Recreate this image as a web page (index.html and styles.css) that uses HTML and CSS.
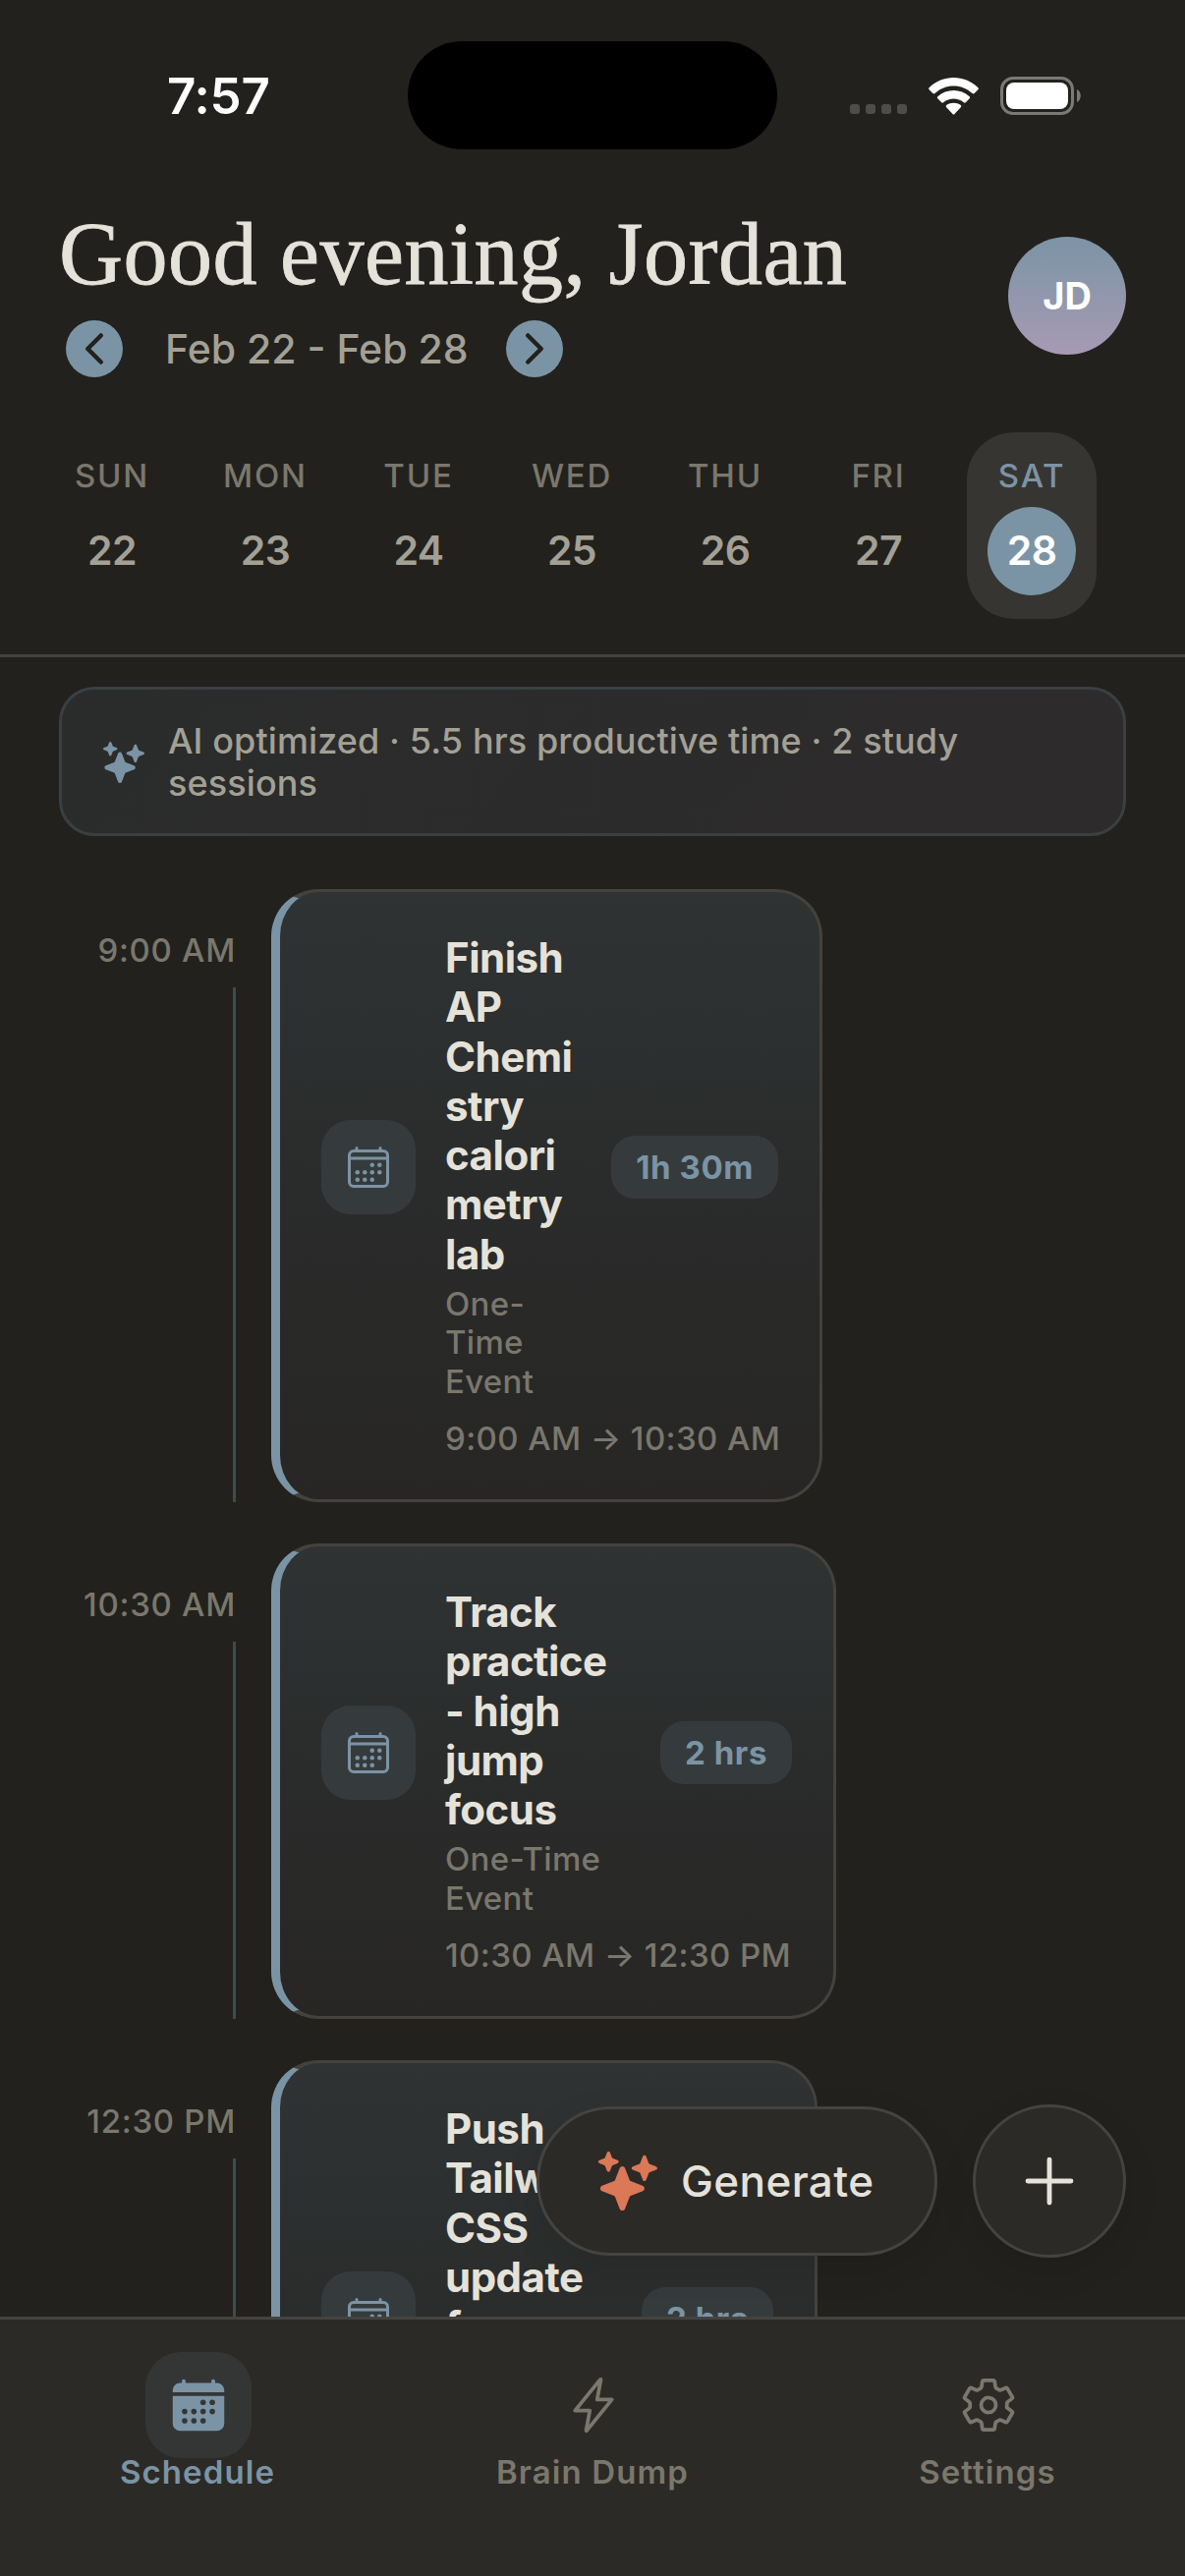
FILE: index.html
```html
<!DOCTYPE html>
<html lang="en">
<head>
	<title>Schedule</title>
	<meta charset="utf-8">
	<meta name="viewport" content="width=device-width, initial-scale=1">
	<link rel="stylesheet" href="styles.css">
</head>
<body>
	<!-- shared icons -->
	<svg class="sprite" width="0" height="0">
		<symbol id="sparkles" viewBox="0 0 512 512">
			<path d="M208 512a24.84 24.84 0 01-23.34-16l-39.84-103.6a16.06 16.06 0 00-9.19-9.19L32 343.34a25 25 0 010-46.68l103.6-39.84a16.06 16.06 0 009.19-9.19L184.66 144a25 25 0 0146.68 0l39.84 103.6a16.06 16.06 0 009.19 9.19l103 39.63A25.49 25.49 0 01400 320.52a24.82 24.82 0 01-16 22.82l-103.6 39.84a16.06 16.06 0 00-9.19 9.19L231.34 496A24.84 24.84 0 01208 512zM88 176a14.67 14.67 0 01-13.69-9.4l-16.86-43.84a7.28 7.28 0 00-4.21-4.21L9.4 101.69a14.67 14.67 0 010-27.38l43.84-16.86a7.31 7.31 0 004.21-4.21L74.16 9.79A15 15 0 0186.23.11a14.67 14.67 0 0115.46 9.29l16.86 43.84a7.31 7.31 0 004.21 4.21l43.84 16.86a14.67 14.67 0 010 27.38l-43.84 16.86a7.28 7.28 0 00-4.21 4.21l-16.86 43.84A14.67 14.67 0 0188 176zM400 256a16 16 0 01-14.93-10.26l-22.84-59.37a8 8 0 00-4.6-4.6l-59.37-22.84a16 16 0 010-29.86l59.37-22.84a8 8 0 004.6-4.6l22.67-58.95a16.45 16.45 0 0113.17-10.57 16 16 0 0116.86 10.15l22.84 59.37a8 8 0 004.6 4.6l59.37 22.84a16 16 0 010 29.86l-59.37 22.84a8 8 0 00-4.6 4.6l-22.84 59.37A16 16 0 01400 256z"/>
		</symbol>
		<symbol id="calendar-dots" viewBox="0 0 512 512">
			<circle cx="296" cy="232" r="24"/><circle cx="376" cy="232" r="24"/>
			<circle cx="136" cy="312" r="24"/><circle cx="216" cy="312" r="24"/><circle cx="296" cy="312" r="24"/><circle cx="376" cy="312" r="24"/>
			<circle cx="136" cy="392" r="24"/><circle cx="216" cy="392" r="24"/><circle cx="296" cy="392" r="24"/>
		</symbol>
		<symbol id="calendar-outline" viewBox="0 0 512 512">
			<rect x="48" y="80" width="416" height="384" rx="48" fill="none" stroke="currentColor" stroke-width="32"/>
			<path d="M128 48v32M384 48v32M464 160H48" fill="none" stroke="currentColor" stroke-width="32" stroke-linecap="round"/>
			<use href="#calendar-dots"/>
		</symbol>
	</svg>

	<div class="status-bar">
		<div class="clock">7:57</div>
		<div class="island"></div>
		<div class="indicators">
			<div class="signal"><i></i><i></i><i></i><i></i></div>
			<svg class="wifi" viewBox="0 0 51 38" fill="#fff">
				<path d="M0.6 12.2a1.5 1.5 0 010-2C14.5-3.3 36.5-3.3 50.4 10.200a1.500 1.500 0 010 2l-3.800 3.900a1.500 1.500 0 01-2 0C34 5.800 17 5.800 6.400 16.100a1.500 1.500 0 01-2 0z"/>
				<path d="M9.300 21.300a1.500 1.500 0 010-2.100c9.200-8.300 23.200-8.300 32.400 0a1.500 1.500 0 010 2.100l-3.900 3.900a1.500 1.500 0 01-2 0c-6-5-14.600-5-20.600 0a1.500 1.500 0 01-2 0z"/>
				<path d="M18.200 30.300a1.500 1.500 0 010-2.200c4.200-3.200 10.400-3.200 14.600 0a1.500 1.500 0 010 2.200l-6.300 6.600a1.400 1.400 0 01-2 0z"/>
			</svg>
			<svg class="battery" viewBox="0 0 82 39">
				<rect x="1.500" y="1.500" width="72" height="36" rx="11.500" fill="none" stroke="#7a7976" stroke-width="3"/>
				<rect x="6" y="6" width="63" height="27" rx="8" fill="#fff"/>
				<path d="M78 13c5 2 5 11 0 13z" fill="#7a7976"/>
			</svg>
		</div>
	</div>

	<header class="header">
		<div class="greeting">
			<h1>Good evening, Jordan</h1>
			<div class="week-nav">
				<button class="round-button" aria-label="Previous week">
					<svg viewBox="0 0 512 512"><path d="M328 112L184 256l144 144"/></svg>
				</button>
				<span class="range">Feb 22 - Feb 28</span>
				<button class="round-button" aria-label="Next week">
					<svg viewBox="0 0 512 512"><path d="M184 112l144 144-144 144"/></svg>
				</button>
			</div>
		</div>
		<div class="avatar">JD</div>
	</header>

	<div class="week">
		<div class="day"><span class="day-name">SUN</span><span class="day-number">22</span></div>
		<div class="day"><span class="day-name">MON</span><span class="day-number">23</span></div>
		<div class="day"><span class="day-name">TUE</span><span class="day-number">24</span></div>
		<div class="day"><span class="day-name">WED</span><span class="day-number">25</span></div>
		<div class="day"><span class="day-name">THU</span><span class="day-number">26</span></div>
		<div class="day"><span class="day-name">FRI</span><span class="day-number">27</span></div>
		<div class="day selected"><span class="day-name">SAT</span><span class="day-number">28</span></div>
	</div>

	<main class="schedule">
		<div class="banner">
			<svg class="banner-icon"><use href="#sparkles"/></svg>
			<p>AI optimized · 5.5 hrs productive time · 2 study<br>sessions</p>
		</div>

		<div class="slot">
			<div class="slot-time">9:00 AM</div>
			<div class="card card-lab">
				<div class="card-row">
					<div class="card-icon"><svg><use href="#calendar-outline"/></svg></div>
					<div class="card-text">
						<h2>Finish<br>AP<br>Chemi<br>stry<br>calori<br>metry<br>lab</h2>
						<p>One-<br>Time<br>Event</p>
					</div>
					<span class="duration">1h 30m</span>
				</div>
				<div class="card-hours">9:00 AM → 10:30 AM</div>
			</div>
		</div>

		<div class="slot">
			<div class="slot-time">10:30 AM</div>
			<div class="card card-track">
				<div class="card-row">
					<div class="card-icon"><svg><use href="#calendar-outline"/></svg></div>
					<div class="card-text">
						<h2>Track<br>practice<br>- high<br>jump<br>focus</h2>
						<p>One-Time<br>Event</p>
					</div>
					<span class="duration">2 hrs</span>
				</div>
				<div class="card-hours">10:30 AM → 12:30 PM</div>
			</div>
		</div>

		<div class="slot">
			<div class="slot-time">12:30 PM</div>
			<div class="card card-push">
				<div class="card-row">
					<div class="card-icon"><svg><use href="#calendar-outline"/></svg></div>
					<div class="card-text">
						<h2>Push<br>Tailwind<br>CSS<br>update<br>for</h2>
					</div>
					<span class="duration">2 hrs</span>
				</div>
			</div>
		</div>
	</main>

	<div class="actions">
		<button class="generate">
			<svg><use href="#sparkles"/></svg>
			<span>Generate</span>
		</button>
		<button class="add" aria-label="Add event">
			<svg viewBox="0 0 512 512"><path d="M256 112v288M400 256H112"/></svg>
		</button>
	</div>

	<nav class="tab-bar">
		<a class="tab active">
			<span class="tab-icon">
				<svg viewBox="0 0 512 512">
					<path fill="currentColor" d="M480 128a64 64 0 00-64-64h-16V48.450c0-8.610-6.620-16-15.230-16.430A16 16 0 00368 48v16H144V48.450c0-8.610-6.620-16-15.230-16.430A16 16 0 00112 48v16H96a64 64 0 00-64 64v12a4 4 0 004 4h440a4 4 0 004-4zM32 416a64 64 0 0064 64h320a64 64 0 0064-64V179a3 3 0 00-3-3H35a3 3 0 00-3 3z"/>
					<use href="#calendar-dots" fill="#343635"/>
				</svg>
			</span>
			<span class="tab-label">Schedule</span>
		</a>
		<a class="tab">
			<span class="tab-icon">
				<svg class="line" viewBox="0 0 512 512"><path d="M315.270 33L96 304h128l-31.510 173.230a2.360 2.360 0 002.330 2.770 2.360 2.360 0 001.890-.950L416 208H288l31.660-173.250a2.450 2.450 0 00-2.440-2.750 2.420 2.420 0 00-1.950 1z"/></svg>
			</span>
			<span class="tab-label">Brain Dump</span>
		</a>
		<a class="tab">
			<span class="tab-icon">
				<svg class="line" viewBox="0 0 512 512"><path d="M262.290 192.310a64 64 0 1057.400 57.400 64.130 64.130 0 00-57.400-57.400zM416.390 256a154.340 154.340 0 01-1.530 20.790l45.210 35.460a10.810 10.810 0 012.450 13.750l-42.770 74a10.810 10.810 0 01-13.140 4.590l-44.900-18.080a16.110 16.110 0 00-15.170 1.750A164.480 164.480 0 01325 400.800a15.940 15.940 0 00-8.820 12.140l-6.730 47.890a11.080 11.080 0 01-10.680 9.170h-85.540a11.110 11.110 0 01-10.690-8.870l-6.720-47.820a16.070 16.070 0 00-9-12.220 155.300 155.300 0 01-21.460-12.570 16 16 0 00-15.110-1.710l-44.890 18.070a10.810 10.810 0 01-13.140-4.580l-42.770-74a10.800 10.800 0 012.450-13.750l38.210-30a16.050 16.050 0 006-14.080c-.360-4.170-.580-8.330-.580-12.500s.210-8.270.580-12.350a16 16 0 00-6.070-13.940l-38.190-30A10.810 10.810 0 0149.480 186l42.770-74a10.810 10.810 0 0113.140-4.590l44.900 18.080a16.110 16.110 0 0015.170-1.750A164.480 164.480 0 01187 111.200a15.940 15.940 0 008.820-12.140l6.730-47.890A11.080 11.080 0 01213.230 42h85.540a11.110 11.110 0 0110.690 8.870l6.720 47.820a16.070 16.070 0 009 12.220 155.300 155.300 0 0121.460 12.570 16 16 0 0015.110 1.710l44.890-18.070a10.810 10.810 0 0113.140 4.580l42.770 74a10.800 10.800 0 01-2.450 13.750l-38.210 30a16.050 16.050 0 00-6.050 14.080c.330 4.140.550 8.300.550 12.470z"/></svg>
			</span>
			<span class="tab-label">Settings</span>
		</a>
	</nav>
</body>
</html>
```
FILE: styles.css
```css
* {
	box-sizing: border-box;
}

body {
	display: flex;
	flex-direction: column;
	position: relative;
	width: 1206px;
	height: 2622px;
	margin: 0;
	overflow: hidden;
	background-color: #22211d;
	color: #e5e2da;
	font-family: Inter, "Liberation Sans", sans-serif;
}

h1, h2, p {
	margin: 0;
}

button {
	border: none;
	padding: 0;
	font-family: inherit;
	color: inherit;
}

.sprite {
	position: absolute;
}

/* status bar */

.status-bar {
	display: grid;
	grid-template-columns: 415px 376px 1fr;
	flex: none;
	height: 208px;
	padding-top: 42px;
}

.clock {
	padding: 25px 0 0 170px;
	font-size: 51px;
	line-height: 62px;
	font-weight: 600;
	letter-spacing: -0.2px;
	color: #ffffff;
}

.island {
	height: 110px;
	border-radius: 55px;
	background-color: #000000;
}

.indicators {
	display: flex;
	align-items: flex-start;
	padding: 36px 0 0 74px;
}

.signal {
	display: flex;
	gap: 6px;
	margin: 28px 22px 0 0;
}

.signal i {
	width: 10px;
	height: 10px;
	border-radius: 3px;
	background-color: #4e4d49;
}

.wifi {
	width: 51px;
	height: 38px;
	margin: 1px 22px 0 0;
}

.battery {
	width: 82px;
	height: 39px;
}

/* header */

.header {
	display: flex;
	justify-content: space-between;
	flex: none;
	height: 232px;
	padding: 0 60px;
}

h1 {
	padding-top: 2px;
	font-family: "Liberation Serif", serif;
	font-size: 90px;
	line-height: 98px;
	font-weight: 400;
	letter-spacing: 0.5px;
	-webkit-text-stroke: 0.8px #e5e2da;
	white-space: nowrap;
}

.week-nav {
	display: flex;
	align-items: center;
	margin: 18px 0 0 7px;
}

.round-button {
	display: flex;
	align-items: center;
	justify-content: center;
	width: 58px;
	height: 58px;
	border-radius: 50%;
	background-color: #7b94a5;
}

.round-button svg {
	width: 48px;
	height: 48px;
	fill: none;
	stroke: #22211d;
	stroke-width: 48;
	stroke-linecap: round;
	stroke-linejoin: round;
}

.range {
	width: 390px;
	padding-left: 43px;
	font-size: 41px;
	line-height: 50px;
	font-weight: 500;
	letter-spacing: 0;
	color: #a3a095;
	white-space: nowrap;
}

.avatar {
	width: 120px;
	height: 120px;
	margin-top: 33px;
	border-radius: 50%;
	background: linear-gradient(#7b94a5, #a79ab4);
	font-size: 38px;
	line-height: 120px;
	font-weight: 700;
	text-align: center;
	color: #ffffff;
}

/* week strip */

.week {
	display: flex;
	gap: 24px;
	flex: none;
	height: 229px;
	padding-left: 48px;
	border-bottom: 3px solid #45433f;
}

.day {
	display: flex;
	flex-direction: column;
	align-items: center;
	width: 132px;
	height: 190px;
	padding-top: 24px;
	border-radius: 48px;
}

.day-name {
	font-size: 33px;
	line-height: 40px;
	font-weight: 500;
	letter-spacing: 1.8px;
	color: #7a776c;
}

.day-number {
	width: 90px;
	height: 90px;
	margin-top: 12px;
	border-radius: 50%;
	font-size: 41px;
	line-height: 89px;
	font-weight: 600;
	letter-spacing: -0.6px;
	text-align: center;
	color: #a3a095;
}

.day.selected {
	background-color: #363531;
}

.selected .day-name {
	color: #7b94a5;
}

.selected .day-number {
	background-color: #7b94a5;
	color: #ffffff;
}

/* schedule */

.schedule {
	flex: 1;
	min-height: 0;
	overflow: hidden;
	padding: 30px 60px 0;
}

.banner {
	display: flex;
	align-items: center;
	gap: 24px;
	height: 152px;
	margin-bottom: 54px;
	padding: 2px 42px 0;
	border: 3px solid #3a4042;
	border-radius: 36px;
	background: linear-gradient(135deg, #2a2c2b, #2e2b2c);
}

.banner-icon {
	width: 42px;
	height: 42px;
	fill: #7b94a5;
}

.banner p {
	font-size: 36px;
	line-height: 43px;
	font-weight: 500;
	letter-spacing: 0.1px;
	color: #a3a095;
	white-space: nowrap;
}

.slot {
	display: flex;
	gap: 36px;
	margin-bottom: 42px;
}

.slot-time {
	display: flex;
	flex-direction: column;
	align-items: flex-end;
	gap: 18px;
	width: 180px;
	padding-top: 42px;
	font-size: 33px;
	line-height: 40px;
	font-weight: 500;
	letter-spacing: 0.7px;
	color: #7a776c;
	white-space: nowrap;
}

.slot-time::after {
	content: "";
	flex: 1;
	width: 3px;
	background-color: #3f4a50;
}

.card {
	padding: 42px;
	border: 3px solid #45423d;
	border-left: 9px solid #7b94a5;
	border-radius: 48px;
	background: linear-gradient(#2f3334, #292a29 60%, #272624);
	white-space: nowrap;
}

.card-lab {
	width: 561px;
	height: 624px;
}

.card-track {
	width: 575px;
	height: 484px;
}

.card-push {
	width: 556px;
	height: 584px;
}

.card-row {
	display: flex;
	align-items: center;
}

.card-push .card-row {
	height: 436px;
}

.card-icon {
	display: flex;
	align-items: center;
	justify-content: center;
	width: 96px;
	height: 96px;
	margin-right: 30px;
	border-radius: 30px;
	background-color: #353b3d;
	color: #7b94a5;
	fill: currentColor;
}

.card-icon svg {
	width: 48px;
	height: 48px;
}

.card-text {
	flex: 1;
	align-self: flex-start;
}

.card-text h2 {
	font-size: 42px;
	line-height: 50.25px;
	font-weight: 650;
	letter-spacing: -0.5px;
}

.card-text p {
	margin-top: 6px;
	font-size: 33px;
	line-height: 39.5px;
	font-weight: 450;
	letter-spacing: 0.3px;
	color: #7a776c;
}

.duration {
	height: 64px;
	padding: 0 25px;
	border-radius: 24px;
	background-color: #353b3d;
	font-size: 33px;
	line-height: 64px;
	font-weight: 700;
	letter-spacing: 0.6px;
	color: #7b94a5;
}

.card-hours {
	margin: 19px 0 0 126px;
	font-size: 33px;
	line-height: 39.5px;
	font-weight: 450;
	letter-spacing: 0.4px;
	color: #7a776c;
}

/* floating buttons over the list */

.actions {
	display: flex;
	align-items: center;
	gap: 36px;
	position: absolute;
	right: 60px;
	bottom: 324px;
}

.generate, .add {
	display: flex;
	align-items: center;
	border: 3px solid #45433f;
	background-color: #2c2a26;
	box-shadow: 0 12px 36px rgba(0, 0, 0, 0.1);
}

.generate {
	gap: 24px;
	width: 408px;
	height: 152px;
	padding-left: 60px;
	border-radius: 76px;
	font-size: 44px;
	font-weight: 500;
	letter-spacing: 0.4px;
}

.generate svg {
	width: 60px;
	height: 60px;
	fill: #db7857;
}

.add {
	justify-content: center;
	width: 156px;
	height: 156px;
	border-radius: 50%;
}

.add svg {
	width: 78px;
	height: 78px;
	stroke: #e5e2da;
	stroke-width: 32;
	stroke-linecap: round;
}

/* tab bar */

.tab-bar {
	display: grid;
	grid-template-columns: repeat(3, 1fr);
	flex: none;
	height: 264px;
	padding-top: 33px;
	border-top: 3px solid #45433f;
	background-color: #2c2a26;
}

.tab {
	display: flex;
	flex-direction: column;
	align-items: center;
	color: #7a776c;
}

.tab-icon {
	display: flex;
	align-items: center;
	justify-content: center;
	width: 108px;
	height: 108px;
	margin-left: 2px;
	border-radius: 36px;
}

.tab-icon svg {
	width: 60px;
	height: 60px;
}

.line {
	fill: none;
	stroke: currentColor;
	stroke-width: 32;
	stroke-linecap: round;
	stroke-linejoin: round;
}

.tab-label {
	margin-top: -6px;
	font-size: 33px;
	line-height: 40px;
	font-weight: 600;
	letter-spacing: 1.1px;
}

.active {
	color: #7b94a5;
}

.active .tab-icon {
	background-color: #343635;
}
```
